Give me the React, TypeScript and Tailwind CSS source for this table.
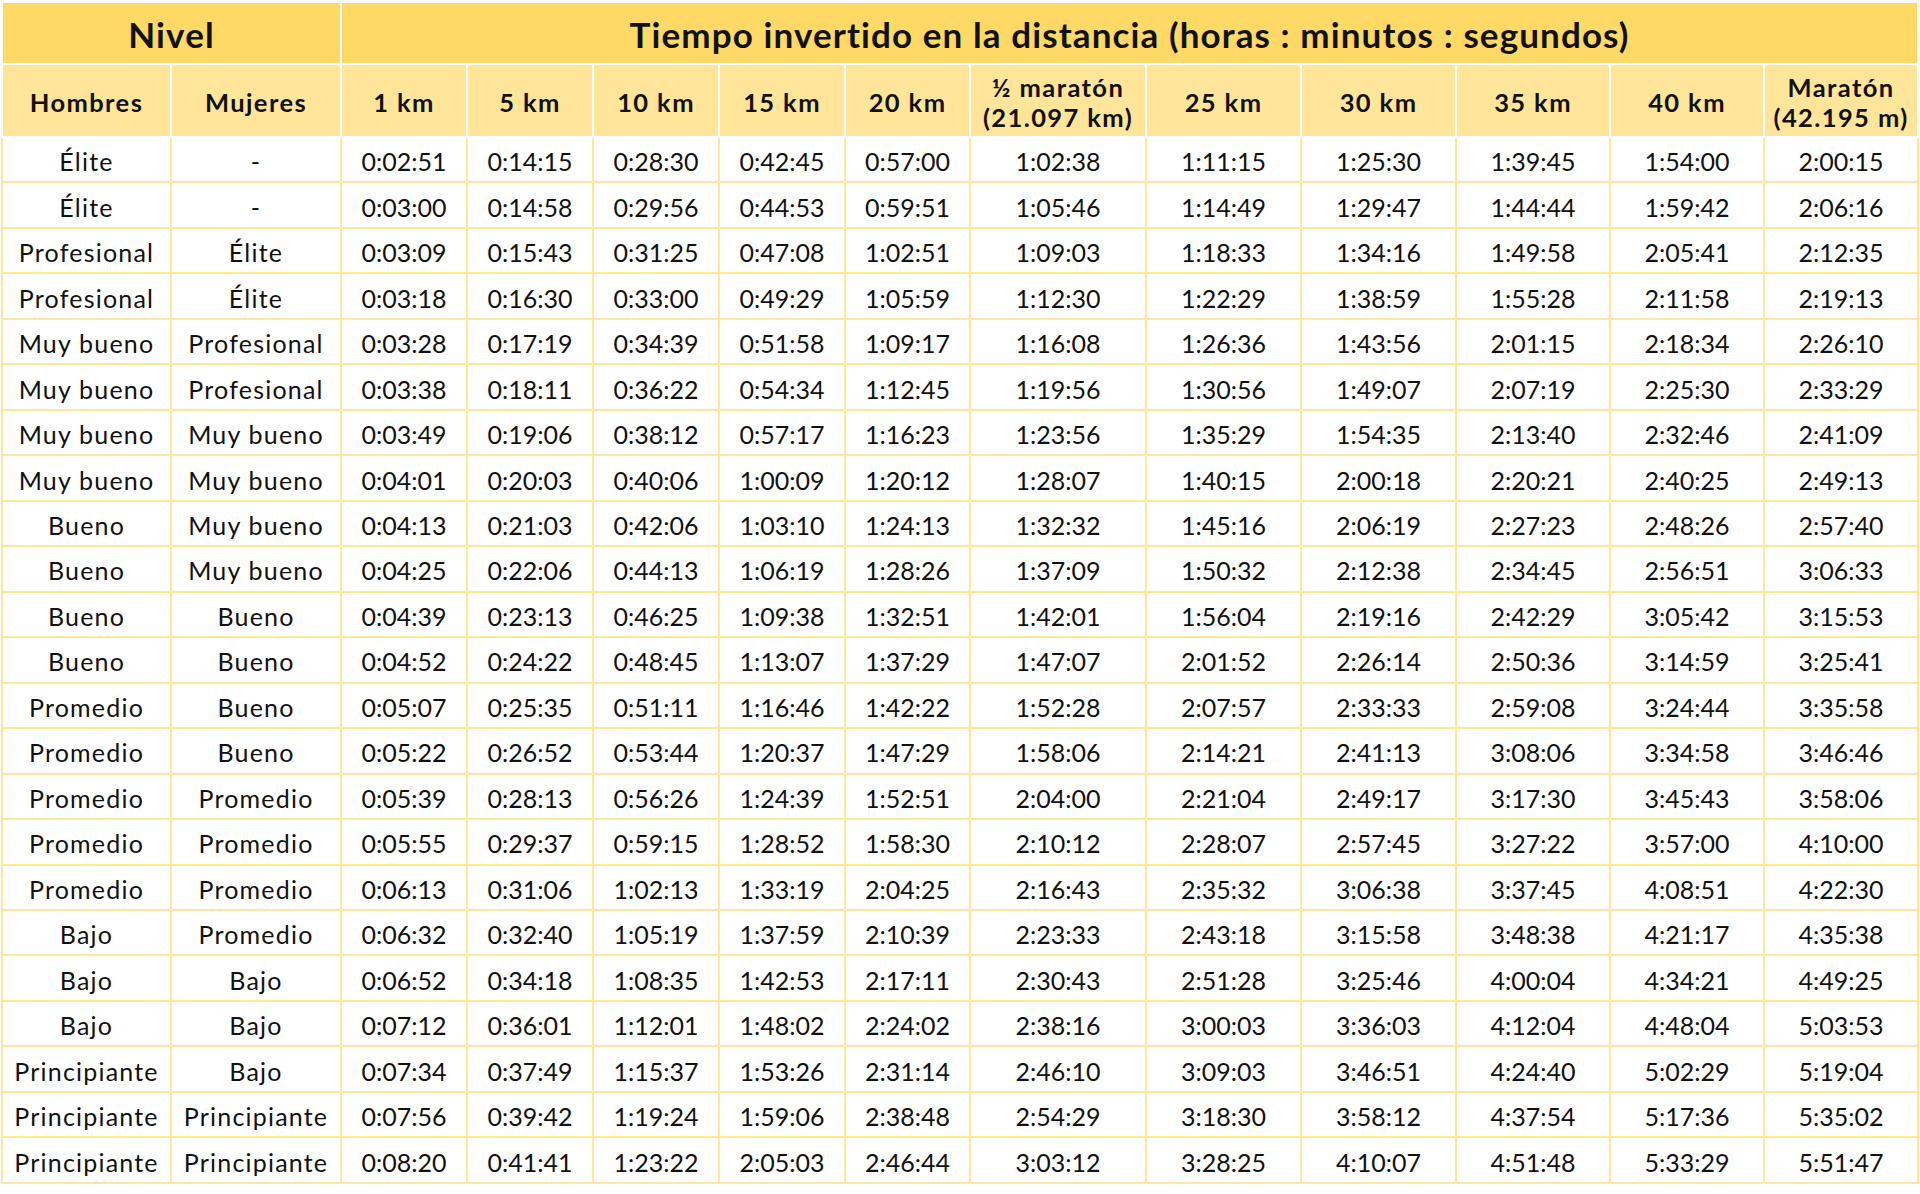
const cols = [169, 170, 126, 126, 126, 126, 125, 176, 155, 155, 154, 154, 154];

const distances: { label: string; sub?: string }[] = [
  { label: "1 km" },
  { label: "5 km" },
  { label: "10 km" },
  { label: "15 km" },
  { label: "20 km" },
  { label: "½ maratón", sub: "(21.097 km)" },
  { label: "25 km" },
  { label: "30 km" },
  { label: "35 km" },
  { label: "40 km" },
  { label: "Maratón", sub: "(42.195 m)" },
];

// hombres, mujeres, then the 11 split times
const rows: string[][] = [
  ["Élite", "-", "0:02:51", "0:14:15", "0:28:30", "0:42:45", "0:57:00", "1:02:38", "1:11:15", "1:25:30", "1:39:45", "1:54:00", "2:00:15"],
  ["Élite", "-", "0:03:00", "0:14:58", "0:29:56", "0:44:53", "0:59:51", "1:05:46", "1:14:49", "1:29:47", "1:44:44", "1:59:42", "2:06:16"],
  ["Profesional", "Élite", "0:03:09", "0:15:43", "0:31:25", "0:47:08", "1:02:51", "1:09:03", "1:18:33", "1:34:16", "1:49:58", "2:05:41", "2:12:35"],
  ["Profesional", "Élite", "0:03:18", "0:16:30", "0:33:00", "0:49:29", "1:05:59", "1:12:30", "1:22:29", "1:38:59", "1:55:28", "2:11:58", "2:19:13"],
  ["Muy bueno", "Profesional", "0:03:28", "0:17:19", "0:34:39", "0:51:58", "1:09:17", "1:16:08", "1:26:36", "1:43:56", "2:01:15", "2:18:34", "2:26:10"],
  ["Muy bueno", "Profesional", "0:03:38", "0:18:11", "0:36:22", "0:54:34", "1:12:45", "1:19:56", "1:30:56", "1:49:07", "2:07:19", "2:25:30", "2:33:29"],
  ["Muy bueno", "Muy bueno", "0:03:49", "0:19:06", "0:38:12", "0:57:17", "1:16:23", "1:23:56", "1:35:29", "1:54:35", "2:13:40", "2:32:46", "2:41:09"],
  ["Muy bueno", "Muy bueno", "0:04:01", "0:20:03", "0:40:06", "1:00:09", "1:20:12", "1:28:07", "1:40:15", "2:00:18", "2:20:21", "2:40:25", "2:49:13"],
  ["Bueno", "Muy bueno", "0:04:13", "0:21:03", "0:42:06", "1:03:10", "1:24:13", "1:32:32", "1:45:16", "2:06:19", "2:27:23", "2:48:26", "2:57:40"],
  ["Bueno", "Muy bueno", "0:04:25", "0:22:06", "0:44:13", "1:06:19", "1:28:26", "1:37:09", "1:50:32", "2:12:38", "2:34:45", "2:56:51", "3:06:33"],
  ["Bueno", "Bueno", "0:04:39", "0:23:13", "0:46:25", "1:09:38", "1:32:51", "1:42:01", "1:56:04", "2:19:16", "2:42:29", "3:05:42", "3:15:53"],
  ["Bueno", "Bueno", "0:04:52", "0:24:22", "0:48:45", "1:13:07", "1:37:29", "1:47:07", "2:01:52", "2:26:14", "2:50:36", "3:14:59", "3:25:41"],
  ["Promedio", "Bueno", "0:05:07", "0:25:35", "0:51:11", "1:16:46", "1:42:22", "1:52:28", "2:07:57", "2:33:33", "2:59:08", "3:24:44", "3:35:58"],
  ["Promedio", "Bueno", "0:05:22", "0:26:52", "0:53:44", "1:20:37", "1:47:29", "1:58:06", "2:14:21", "2:41:13", "3:08:06", "3:34:58", "3:46:46"],
  ["Promedio", "Promedio", "0:05:39", "0:28:13", "0:56:26", "1:24:39", "1:52:51", "2:04:00", "2:21:04", "2:49:17", "3:17:30", "3:45:43", "3:58:06"],
  ["Promedio", "Promedio", "0:05:55", "0:29:37", "0:59:15", "1:28:52", "1:58:30", "2:10:12", "2:28:07", "2:57:45", "3:27:22", "3:57:00", "4:10:00"],
  ["Promedio", "Promedio", "0:06:13", "0:31:06", "1:02:13", "1:33:19", "2:04:25", "2:16:43", "2:35:32", "3:06:38", "3:37:45", "4:08:51", "4:22:30"],
  ["Bajo", "Promedio", "0:06:32", "0:32:40", "1:05:19", "1:37:59", "2:10:39", "2:23:33", "2:43:18", "3:15:58", "3:48:38", "4:21:17", "4:35:38"],
  ["Bajo", "Bajo", "0:06:52", "0:34:18", "1:08:35", "1:42:53", "2:17:11", "2:30:43", "2:51:28", "3:25:46", "4:00:04", "4:34:21", "4:49:25"],
  ["Bajo", "Bajo", "0:07:12", "0:36:01", "1:12:01", "1:48:02", "2:24:02", "2:38:16", "3:00:03", "3:36:03", "4:12:04", "4:48:04", "5:03:53"],
  ["Principiante", "Bajo", "0:07:34", "0:37:49", "1:15:37", "1:53:26", "2:31:14", "2:46:10", "3:09:03", "3:46:51", "4:24:40", "5:02:29", "5:19:04"],
  ["Principiante", "Principiante", "0:07:56", "0:39:42", "1:19:24", "1:59:06", "2:38:48", "2:54:29", "3:18:30", "3:58:12", "4:37:54", "5:17:36", "5:35:02"],
  ["Principiante", "Principiante", "0:08:20", "0:41:41", "1:23:22", "2:05:03", "2:46:44", "3:03:12", "3:28:25", "4:10:07", "4:51:48", "5:33:29", "5:51:47"],
];

const topHead =
  "border-2 border-white bg-[#ffd966] pt-[3px] text-center align-middle text-[35px] font-bold leading-none tracking-[1.1px]";
const subHead =
  "border-2 border-white bg-[#ffe599] pt-[3px] text-center align-middle text-[25.5px] font-bold leading-[30px] tracking-[1.4px]";

export default function App() {
  return (
    <div className="min-h-[1194px] w-[1920px] bg-white font-['Lato','Open_Sans',sans-serif] text-[#111]">
      <table className="ml-px mt-px w-[1916px] table-fixed border-collapse border-2 border-[#ffe699]">
        <colgroup>
          {cols.map((w, i) => (
            <col key={i} style={{ width: w }} />
          ))}
        </colgroup>
        <thead>
          <tr className="h-[62px]">
            <th colSpan={2} className={topHead}>
              Nivel
            </th>
            <th colSpan={11} className={topHead}>
              Tiempo invertido en la distancia (horas : minutos : segundos)
            </th>
          </tr>
          <tr className="h-[73px]">
            {["Hombres", "Mujeres"].map((h) => (
              <th key={h} className={subHead}>
                {h}
              </th>
            ))}
            {distances.map((d) => (
              <th key={d.label} className={subHead}>
                {d.label}
                {d.sub && (
                  <>
                    <br />
                    {d.sub}
                  </>
                )}
              </th>
            ))}
          </tr>
        </thead>
        <tbody>
          {rows.map((r, i) => (
            <tr key={i} className="h-[45.48px]">
              {r.map((c, j) => (
                <td
                  key={j}
                  className={
                    j < 2
                      ? "border-2 border-[#ffe699] pt-[4px] text-center align-middle text-[25px] leading-none whitespace-nowrap tracking-[1.2px]"
                      : "border-2 border-[#ffe699] pt-[4px] text-center align-middle text-[25px] leading-none whitespace-nowrap"
                  }
                >
                  {c}
                </td>
              ))}
            </tr>
          ))}
        </tbody>
      </table>
    </div>
  );
}
